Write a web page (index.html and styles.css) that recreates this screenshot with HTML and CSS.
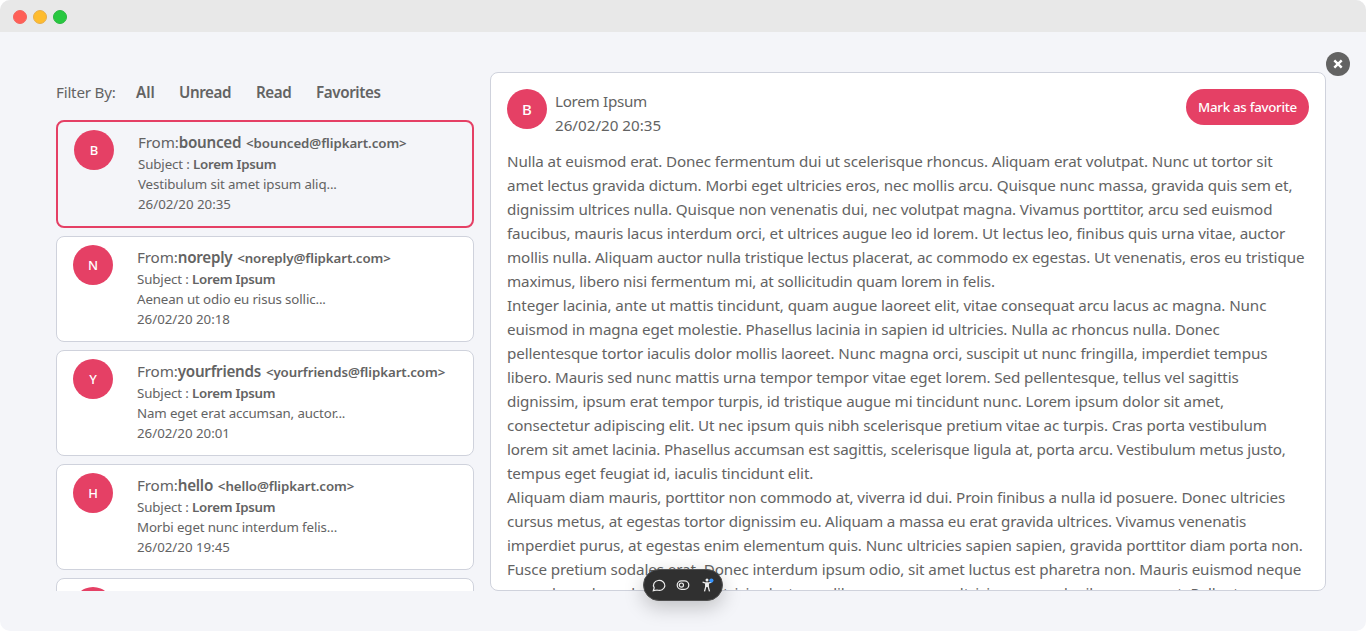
FILE: index.html
```html
<!DOCTYPE html>
<html lang="en">
<head>
<meta charset="utf-8">
<title>Mail</title>
<link rel="stylesheet" href="styles.css">
</head>
<body>
<div class="window">
  <header class="titlebar"><span class="dot red"></span><span class="dot yellow"></span><span class="dot green"></span></header>
  <main class="content">
    <section class="sidebar">
      <nav class="filters"><span class="filter-label">Filter By:</span><b class="f-all">All</b><b class="f-unread">Unread</b><b class="f-read">Read</b><b>Favorites</b></nav>
      <article class="mail selected"><span class="avatar">B</span><div class="info"><div class="from">From:<b>bounced</b> <b class="addr">&lt;bounced@flipkart.com&gt;</b></div><div>Subject : <b>Lorem Ipsum</b></div><div>Vestibulum sit amet ipsum aliq...</div><div class="date">26/02/20 20:35</div></div></article>
      <article class="mail"><span class="avatar">N</span><div class="info"><div class="from">From:<b>noreply</b> <b class="addr">&lt;noreply@flipkart.com&gt;</b></div><div>Subject : <b>Lorem Ipsum</b></div><div>Aenean ut odio eu risus sollic...</div><div class="date">26/02/20 20:18</div></div></article>
      <article class="mail"><span class="avatar">Y</span><div class="info"><div class="from">From:<b>yourfriends</b> <b class="addr">&lt;yourfriends@flipkart.com&gt;</b></div><div>Subject : <b>Lorem Ipsum</b></div><div>Nam eget erat accumsan, auctor...</div><div class="date">26/02/20 20:01</div></div></article>
      <article class="mail"><span class="avatar">H</span><div class="info"><div class="from">From:<b>hello</b> <b class="addr">&lt;hello@flipkart.com&gt;</b></div><div>Subject : <b>Lorem Ipsum</b></div><div>Morbi eget nunc interdum felis...</div><div class="date">26/02/20 19:45</div></div></article>
      <article class="mail"><span class="avatar"></span></article>
    </section>
    <section class="reader">
      <header class="reader-head"><span class="avatar">B</span><div class="meta"><div class="name">Lorem Ipsum</div><div>26/02/20 20:35</div></div><button class="favorite">Mark as favorite</button></header>
      <div class="body">Nulla at euismod erat. Donec fermentum dui ut scelerisque rhoncus. Aliquam erat volutpat. Nunc ut tortor sit<br>
amet lectus gravida dictum. Morbi eget ultricies eros, nec mollis arcu. Quisque nunc massa, gravida quis sem et,<br>
dignissim ultrices nulla. Quisque non venenatis dui, nec volutpat magna. Vivamus porttitor, arcu sed euismod<br>
faucibus, mauris lacus interdum orci, et ultrices augue leo id lorem. Ut lectus leo, finibus quis urna vitae, auctor<br>
mollis nulla. Aliquam auctor nulla tristique lectus placerat, ac commodo ex egestas. Ut venenatis, eros eu tristique<br>
<span class="tight">maximus, libero nisi fermentum mi, at sollicitudin quam lorem in felis.</span><br>
Integer lacinia, ante ut mattis tincidunt, quam augue laoreet elit, vitae consequat arcu lacus ac magna. Nunc<br>
euismod in magna eget molestie. Phasellus lacinia in sapien id ultricies. Nulla ac rhoncus nulla. Donec<br>
pellentesque tortor iaculis dolor mollis laoreet. Nunc magna orci, suscipit ut nunc fringilla, imperdiet tempus<br>
libero. Mauris sed nunc mattis urna tempor tempor vitae eget lorem. Sed pellentesque, tellus vel sagittis<br>
dignissim, ipsum erat tempor turpis, id tristique augue mi tincidunt nunc. Lorem ipsum dolor sit amet,<br>
consectetur adipiscing elit. Ut nec ipsum quis nibh scelerisque pretium vitae ac turpis. Cras porta vestibulum<br>
<span class="tight">lorem sit amet lacinia. Phasellus accumsan est sagittis, scelerisque ligula at, porta arcu. Vestibulum metus justo,</span><br>
tempus eget feugiat id, iaculis tincidunt elit.<br>
Aliquam diam mauris, porttitor non commodo at, viverra id dui. Proin finibus a nulla id posuere. Donec ultricies<br>
<span class="tight">cursus metus, at egestas tortor dignissim eu. Aliquam a massa eu erat gravida ultrices. Vivamus venenatis</span><br>
imperdiet purus, at egestas enim elementum quis. Nunc ultricies sapien sapien, gravida porttitor diam porta non.<br>
Fusce pretium sodales erat. Donec interdum ipsum odio, sit amet luctus est pharetra non. Mauris euismod neque<br>
purus lacus lacus lacus nunc ultricies lectus ac libero eros nunc ultricies massa dapibus cursus et. Pellentesque</div>
    </section>
    <button class="close" aria-label="Close"><svg viewBox="0 0 24 24"><path d="M8.3 8.3l7.4 7.4M15.7 8.3l-7.4 7.4"/></svg></button>
    <div class="toolbar">
      <svg viewBox="0 0 16 16"><path d="M3.2 10.8A5.7 5 0 1 1 6 13L2.3 13.7z"/></svg>
      <svg viewBox="0 0 16 16"><rect x="2.2" y="3.8" width="11.6" height="8.6" rx="4.3"/><circle cx="6.4" cy="8.1" r="2.1"/></svg>
      <svg viewBox="0 0 16 16"><circle class="fill" cx="8" cy="3" r="1.5"/><path class="man" d="M3.6 5.1l3 .9h2.8l3-.9M8 6v4M6.7 6v4l-1.2 4.3M9.3 6v4l1.2 4.3"/><circle class="blue" cx="12.4" cy="3.6" r="2.1"/></svg>
    </div>
  </main>
</div>
</body>
</html>
```
FILE: styles.css
```css
* { box-sizing: border-box; }
body { margin: 0; background: #fff; color: #636363; font: 15.2px/24px "Noto Sans", sans-serif; }
b { font-weight: 600; letter-spacing: -0.2px; }
.window { height: 631px; border-radius: 10px; overflow: hidden; background: #f4f5f9; }
.titlebar { height: 32px; background: #e8e8e8; display: flex; align-items: center; padding: 2px 0 0 13px; gap: 6px; }
.dot { width: 14px; height: 14px; border-radius: 50%; border: 1px solid; }
.red { background: #ff5f57; border-color: #f1655f; }
.yellow { background: #febc2e; border-color: #e5ae4c; }
.green { background: #28c840; border-color: #2bb640; }
.content { position: relative; height: 599px; padding: 40px 40px 40px 56px; display: flex; gap: 16px; }
.sidebar { width: 418px; height: 519px; overflow: hidden; display: flex; flex-direction: column; gap: 8px; }
.filters { flex: none; height: 40px; padding-top: 8px; display: flex; white-space: nowrap; }
.filters b { letter-spacing: -0.4px; }
.filter-label { width: 80px; letter-spacing: -0.2px; }
.filters .f-all { width: 43px; letter-spacing: 0; }
.f-unread { width: 77px; }
.f-read { width: 60px; }
.mail { flex: none; height: 106px; border: 1px solid #cfd2dc; border-radius: 8px; background: #fff; padding: 8px 16px; display: flex; gap: 24px; }
.selected { height: 108px; border: 2px solid #e54065; background: #f4f5f9; }
.avatar { flex: none; width: 40px; height: 40px; border-radius: 50%; background: #e54065; color: #fff; font-size: 13px; font-weight: 500; line-height: 40px; text-align: center; }
.info { font-size: 13.3px; line-height: 20px; letter-spacing: -0.12px; white-space: nowrap; }
.info b { letter-spacing: -0.25px; }
.from { font-size: 15.2px; line-height: 24px; margin-bottom: -1px; }
.info .addr { font-size: 13.3px; letter-spacing: -0.08px; margin-left: 1px; }
.date { letter-spacing: 0; }
.reader { flex: 1; height: 519px; border: 1px solid #cfd2dc; border-radius: 8px; background: #fff; padding: 16px; overflow: hidden; }
.reader-head { display: flex; align-items: flex-start; height: 60px; }
.reader-head .avatar { font-size: 15px; }
.meta { flex: 1; padding-left: 8px; }
.name { letter-spacing: -0.3px; }
.favorite { width: 123px; height: 36px; padding: 0; border: 0; border-radius: 18px; background: #e54065; color: #fff; font: 500 13.3px/36px "Noto Sans", sans-serif; letter-spacing: -0.27px; }
.body { white-space: nowrap; letter-spacing: -0.11px; }
.tight { letter-spacing: -0.15px; }
.close { position: absolute; top: 20px; right: 16px; width: 24px; height: 24px; padding: 0; border: 0; border-radius: 50%; background: #636363; }
.close svg { display: block; width: 24px; height: 24px; stroke: #fff; stroke-width: 2.4; }
.toolbar { position: absolute; left: 643px; top: 537px; width: 80px; height: 32px; border-radius: 16px; background: #303030; border: 1px solid #505050; box-shadow: 0 6px 20px rgba(0,0,0,.22); display: flex; align-items: center; justify-content: center; gap: 8px; }
.toolbar svg { width: 16px; height: 16px; fill: none; stroke: #eee; stroke-width: 1.2; }
.toolbar .fill { fill: #eee; stroke: none; }
.toolbar .man { stroke-width: 1.3; }
.toolbar .blue { fill: #3694ff; stroke: none; }
```
